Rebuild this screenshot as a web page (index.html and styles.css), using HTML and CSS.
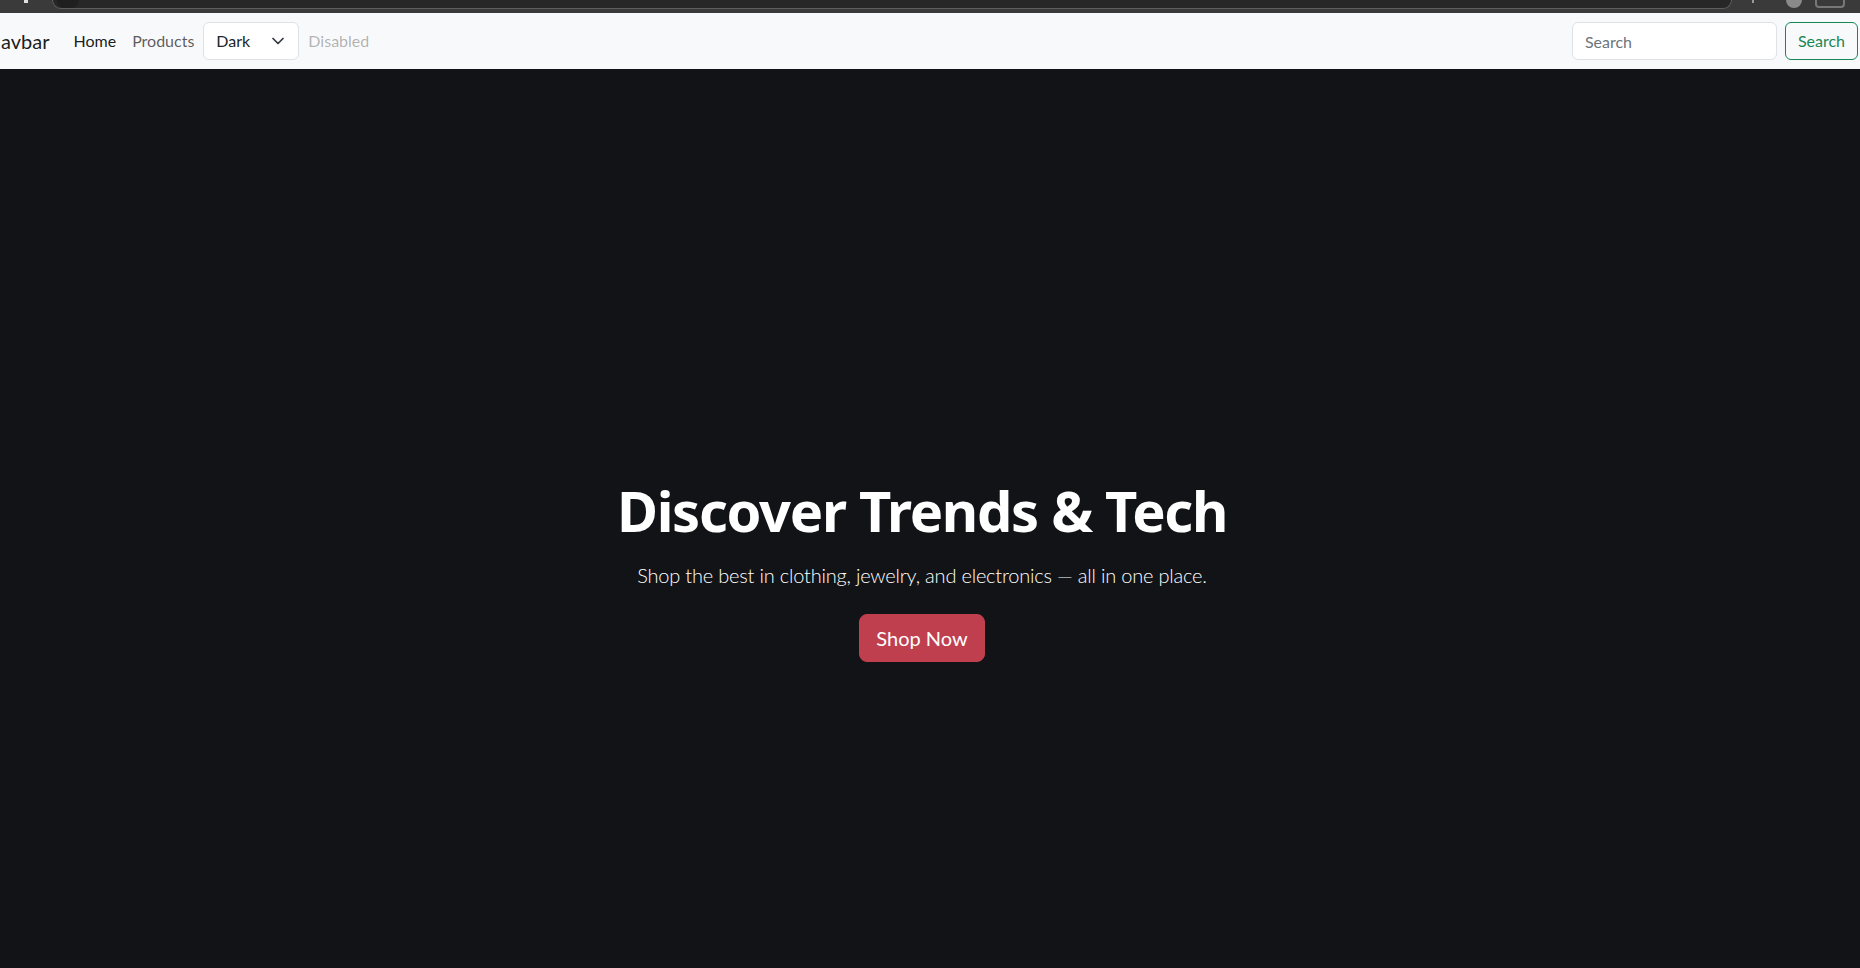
FILE: index.html
```html
<!DOCTYPE html>
<html lang="en">
<head>
<meta charset="utf-8">
<title>Shop</title>
<link rel="stylesheet" href="styles.css">
</head>
<body>
<div class="chrome">
  <span class="chrome-mark"></span>
  <div class="chrome-bar"><span class="chrome-dot"></span></div>
  <span class="chrome-tick"></span>
  <span class="chrome-avatar"></span>
  <span class="chrome-box"></span>
</div>
<nav class="navbar">
  <div class="nav-left">
    <a class="brand" href="#">avbar</a>
    <ul class="nav">
      <li><a class="nav-link active" href="#">Home</a></li>
      <li><a class="nav-link" href="#">Products</a></li>
      <li>
        <div class="select">
          <span>Dark</span>
          <svg class="chevron" width="12" height="8" viewBox="0 0 12 8"><path d="M1 1.5l5 5 5-5" fill="none" stroke="#343a40" stroke-width="1.7" stroke-linecap="round" stroke-linejoin="round"/></svg>
        </div>
      </li>
      <li><span class="nav-link disabled">Disabled</span></li>
    </ul>
  </div>
  <form class="search">
    <input class="search-input" type="search" placeholder="Search">
    <button class="btn-search" type="button">Search</button>
  </form>
</nav>
<section class="hero">
  <h1 class="hero-title">Discover Trends &amp; Tech</h1>
  <p class="hero-lead">Shop the best in clothing, jewelry, and electronics — all in one place.</p>
  <a class="btn-shop" href="#">Shop Now</a>
</section>
</body>
</html>
```
FILE: styles.css
```css
* { box-sizing: border-box; }
html, body { margin: 0; padding: 0; }
body {
  font-family: Lato, "Noto Sans", sans-serif;
  line-height: 1.5;
  background: #121316;
  overflow: hidden;
  height: 968px;
}
.chrome {
  height: 13px;
  background: #3a3a3a;
  display: flex;
  align-items: flex-start;
}
.chrome-mark { width: 4px; height: 3px; background: #e0e0e0; margin-left: 24px; }
.chrome-bar {
  margin-left: 24px;
  width: 1680px;
  height: 9px;
  background: #272727;
  border: 1px solid #5d5d5d;
  border-top: none;
  border-radius: 0 0 12px 12px;
  display: flex;
  align-items: flex-end;
}
.chrome-dot { width: 22px; height: 8px; margin-left: 4px; border-radius: 0 0 11px 11px; background: #1f1f1f; }
.chrome-tick { width: 2px; height: 3px; background: #9a9a9a; margin-left: 20px; }
.chrome-avatar { width: 16px; height: 8px; border-radius: 0 0 8px 8px; background: #8a8a8a; margin-left: 32px; }
.chrome-box { width: 30px; height: 8px; border: 2px solid #777; border-top: none; border-radius: 0 0 4px 4px; margin-left: 13px; }
.navbar {
  height: 56px;
  background: #f8f9fa;
  display: flex;
  align-items: center;
  justify-content: space-between;
  padding: 0 2px 0 1px;
}
.nav-left { display: flex; align-items: center; }
.brand {
  font-size: 20px; line-height: 30px; padding: 5px 0;
  color: rgba(0,0,0,.9); text-decoration: none; margin-right: 16px;
}
.nav { display: flex; align-items: center; list-style: none; margin: 0; padding: 0; }
.nav-link { display: block; padding: 8px; font-size: 16px; color: rgba(0,0,0,.65); text-decoration: none; }
.nav-link.active { color: rgba(0,0,0,.9); }
.nav-link.disabled { color: rgba(0,0,0,.3); }
.select {
  width: 96px; height: 38px;
  display: flex; align-items: center; justify-content: space-between;
  padding: 0 14px 0 12px;
  background: #fff; border: 1px solid #dee2e6; border-radius: 6px;
  font-size: 16px; color: #212529;
  margin: 0 1px 0 1px;
}
.chevron { display: block; }
.search { display: flex; align-items: center; }
.search-input {
  width: 205px; height: 38px; padding: 6px 12px;
  font: inherit; font-size: 16px; color: #212529;
  border: 1px solid #dee2e6; border-radius: 6px; background: #fff;
  margin-right: 8px; outline: none;
}
.search-input::placeholder { color: #6c757d; }
.btn-search {
  height: 38px; padding: 6px 12px;
  font: inherit; font-size: 16px; color: #198754;
  background: transparent; border: 1px solid #198754; border-radius: 6px;
}
.hero {
  height: 899px;
  display: flex; flex-direction: column; align-items: center;
  padding: 408px 16px 0 0;
  color: #fff;
}
.hero-title {
  font-family: "Noto Sans", sans-serif;
  font-size: 56px; font-weight: 700; line-height: 1.2;
  letter-spacing: -1.3px;
  margin: 0 0 16px;
}
.hero-lead {
  font-size: 20px; font-weight: 300; line-height: 30px;
  letter-spacing: -0.2px;
  margin: 0 0 24px;
}
.btn-shop {
  display: inline-block; padding: 8px 16px; font-size: 20px; line-height: 30px;
  color: #fff; background: #c03f4f; border: 1px solid #c03f4f; border-radius: 8px; text-decoration: none;
}
```
